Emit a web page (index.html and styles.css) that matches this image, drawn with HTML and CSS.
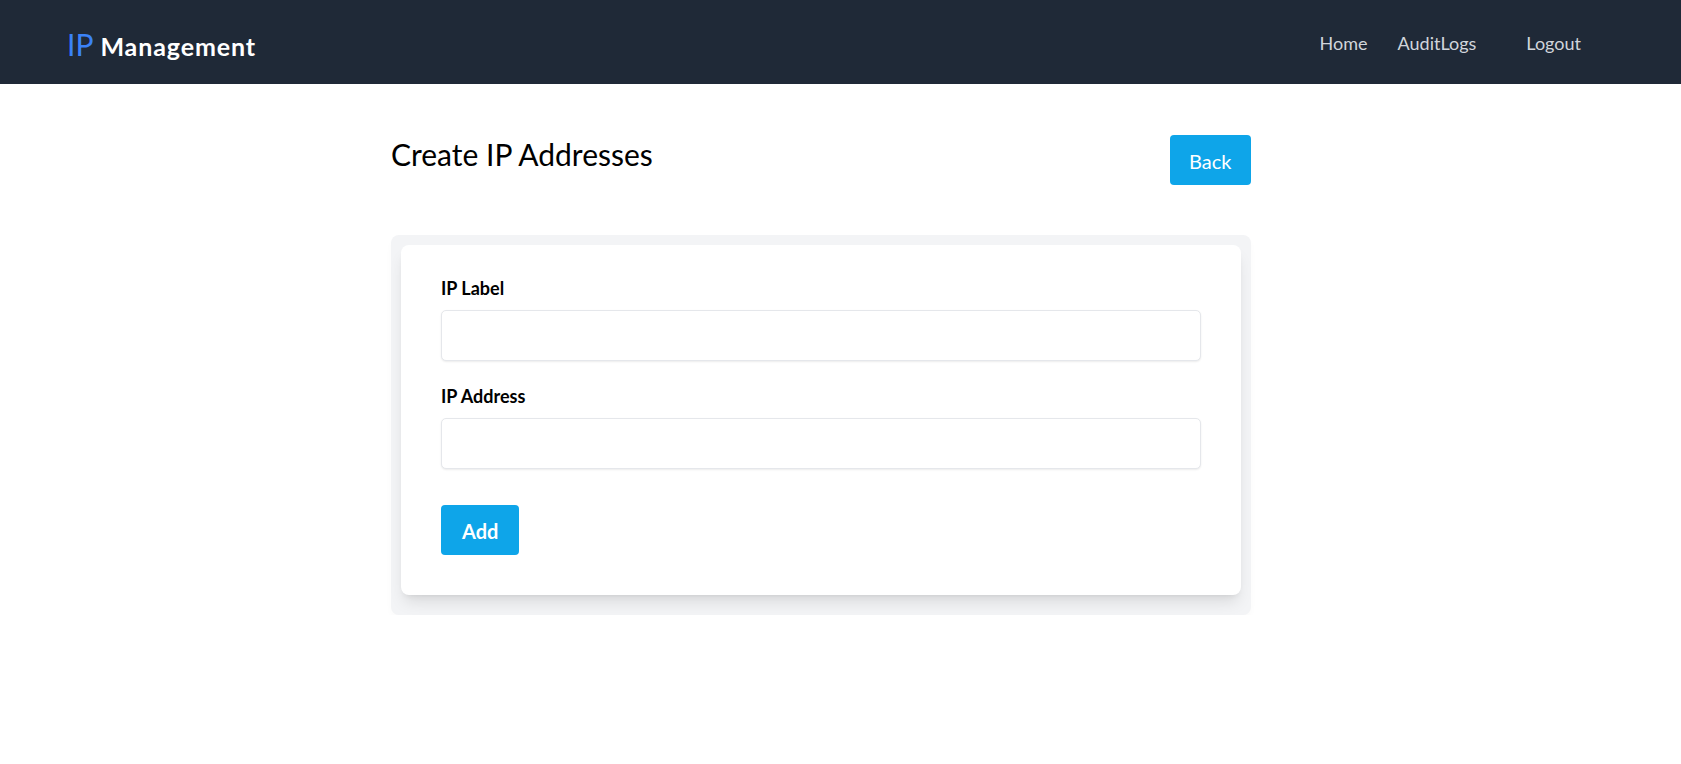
FILE: index.html
```html
<!DOCTYPE html>
<html lang="en">
<head>
<meta charset="utf-8">
<title>IP Management</title>
<link rel="stylesheet" href="styles.css">
</head>
<body>
<header class="topbar">
  <div class="brand"><span class="brand-ip">IP</span><span class="brand-name">Management</span></div>
  <nav class="nav">
    <a class="nav-link nav-home" href="#">Home</a>
    <a class="nav-link nav-audit" href="#">AuditLogs</a>
    <a class="nav-link nav-logout" href="#">Logout</a>
  </nav>
</header>
<main class="page">
  <div class="page-head">
    <h1 class="page-title">Create IP Addresses</h1>
    <button class="btn btn-back" type="button">Back</button>
  </div>
  <div class="panel">
    <form class="card">
      <div class="field">
        <label class="field-label" for="ip-label">IP Label</label>
        <input class="field-input" id="ip-label" type="text">
      </div>
      <div class="field">
        <label class="field-label" for="ip-address">IP Address</label>
        <input class="field-input" id="ip-address" type="text">
      </div>
      <button class="btn btn-add" type="button">Add</button>
    </form>
  </div>
</main>
</body>
</html>
```

FILE: styles.css
```css
* { box-sizing: border-box; }

body {
  margin: 0;
  font-family: "Lato", "Noto Sans", sans-serif;
  background: #ffffff;
  color: #000000;
}

.topbar {
  height: 84px;
  background: #1f2937;
  display: flex;
  align-items: center;
  justify-content: space-between;
  padding: 0 100px 0 67px;
}

.brand {
  display: flex;
  align-items: baseline;
  gap: 7px;
  padding-top: 3px;
  line-height: 36px;
  white-space: nowrap;
}

.brand-ip {
  font-size: 30px;
  font-weight: 400;
  color: #3b82f6;
}

.brand-name {
  font-size: 25px;
  font-weight: 700;
  letter-spacing: 0.9px;
  color: #ffffff;
  line-height: 24px;
}

.nav {
  display: flex;
  align-items: center;
  padding-top: 2px;
}

.nav-link {
  font-size: 18px;
  line-height: 28px;
  color: #d1d5db;
  text-decoration: none;
}

.nav-home { margin-right: 30px; }
.nav-audit { margin-right: 50px; }

.page {
  width: 860px;
  margin-left: 391px;
}

.page-head {
  margin-top: 51px;
  display: flex;
  justify-content: space-between;
  align-items: flex-start;
}

.page-title {
  margin: 0;
  padding-top: 1px;
  font-size: 30px;
  line-height: 36px;
  font-weight: 400;
  color: #000000;
}

.btn {
  border: 0;
  border-radius: 4px;
  background: #0ea5e9;
  color: #ffffff;
  font-family: inherit;
  display: flex;
  align-items: center;
  justify-content: center;
  cursor: pointer;
}

.btn-back {
  height: 50px;
  padding: 1px 19.5px 0;
  font-size: 20px;
  line-height: 28px;
  font-weight: 400;
}

.panel {
  margin-top: 50px;
  background: #f3f4f6;
  border-radius: 8px;
  padding: 10px 10px 20px;
  box-shadow: 0 4px 8px -2px rgba(0, 0, 0, 0.04);
}

.card {
  background: #ffffff;
  border-radius: 8px;
  padding: 29px 40px 40px;
  box-shadow: 0 10px 15px -3px rgba(0, 0, 0, 0.1), 0 4px 6px -4px rgba(0, 0, 0, 0.1);
}

.field + .field { margin-top: 21px; }

.field-label {
  display: block;
  font-size: 18px;
  line-height: 28px;
  font-weight: 700;
  color: #000000;
  margin-bottom: 8px;
}

.field-input {
  display: block;
  width: 100%;
  height: 51px;
  border: 1px solid #e5e7eb;
  border-radius: 5px;
  background: #ffffff;
  box-shadow: 0 1px 2px rgba(0, 0, 0, 0.08);
  font-family: inherit;
  font-size: 16px;
  padding: 0 12px;
  outline: none;
}

.btn-add {
  margin-top: 36px;
  height: 50px;
  padding: 2px 21px 0;
  font-size: 20px;
  line-height: 28px;
  font-weight: 700;
}
```
